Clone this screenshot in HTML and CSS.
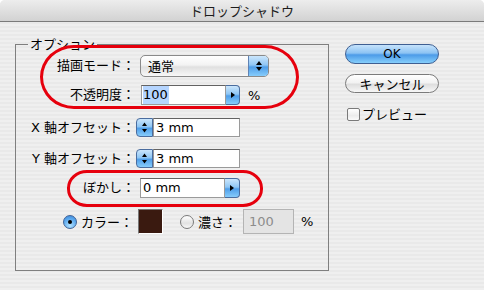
FILE: index.html
```html
<!DOCTYPE html>
<html lang="ja">
<head>
<meta charset="utf-8">
<title>ドロップシャドウ</title>
<link rel="stylesheet" href="styles.css">
</head>
<body>
<div class="window">
  <div class="titlebar">ドロップシャドウ</div>
  <div class="content">
    <fieldset class="group">
      <legend>オプション</legend>
      <div class="rows">
        <div class="row r1">
          <span class="lbl">描画モード：</span>
          <div class="popup">
            <span class="popval">通常</span>
            <span class="popcap"><svg width="8" height="14" viewBox="0 0 8 14"><path d="M4 2 L7 6 H1 Z M4 12 L1 8 H7 Z" fill="#000"/></svg></span>
          </div>
        </div>
        <div class="row r2">
          <span class="lbl">不透明度：</span>
          <div class="field f-op"><span class="sel">100</span></div>
          <span class="arrowbtn"><svg width="6" height="8" viewBox="0 0 6 8"><path d="M1 1 L5 4 L1 7 Z" fill="#000"/></svg></span>
          <span class="unit">%</span>
        </div>
        <div class="row r3">
          <span class="lbl">X 軸オフセット：</span>
          <span class="stepper"><svg width="7" height="13" viewBox="0 0 7 13"><path d="M3.5 1.5 L6 5 H1 Z M3.5 11.5 L1 8 H6 Z" fill="#000"/></svg></span>
          <div class="field f-off">3 mm</div>
        </div>
        <div class="row r4">
          <span class="lbl">Y 軸オフセット：</span>
          <span class="stepper"><svg width="7" height="13" viewBox="0 0 7 13"><path d="M3.5 1.5 L6 5 H1 Z M3.5 11.5 L1 8 H6 Z" fill="#000"/></svg></span>
          <div class="field f-off">3 mm</div>
        </div>
        <div class="row r5">
          <span class="lbl">ぼかし：</span>
          <div class="field f-blur">0 mm</div>
          <span class="arrowbtn"><svg width="6" height="8" viewBox="0 0 6 8"><path d="M1 1 L5 4 L1 7 Z" fill="#000"/></svg></span>
        </div>
        <div class="row r6">
          <span class="radio on"></span>
          <span class="rlbl">カラー：</span>
          <span class="swatch"></span>
          <span class="radio off"></span>
          <span class="rlbl">濃さ：</span>
          <div class="field dis">100</div>
          <span class="unit">%</span>
        </div>
      </div>
    </fieldset>
    <div class="side">
      <button class="btn ok">OK</button>
      <button class="btn cancel">キャンセル</button>
      <label class="check"><span class="box"></span>プレビュー</label>
    </div>
  </div>
  <div class="mark m1"></div>
  <div class="mark m2"></div>
</div>
</body>
</html>
```
FILE: styles.css
```css
* { box-sizing: border-box; }
html, body { margin: 0; padding: 0; }
body {
  width: 484px;
  height: 290px;
  overflow: hidden;
  background: #ffffff;
  font-family: "DejaVu Sans", "Noto Sans CJK JP", sans-serif;
  font-size: 13px;
  color: #000;
}
.window {
  position: relative;
  width: 484px;
  height: 290px;
  border-radius: 5px 5px 0 0;
  overflow: hidden;
  background: repeating-linear-gradient(to bottom, #efefef 0 2px, #e9e9e9 2px 4px);
}
.titlebar {
  height: 22px;
  border-bottom: 1px solid #7b7b7b;
  background: linear-gradient(#ededed, #d2d2d2);
  text-align: center;
  line-height: 21px;
  font-family: "Noto Sans CJK JP", sans-serif;
  color: #1c1c1c;
}
.content {
  display: flex;
  align-items: flex-start;
  padding-left: 15px;
}
.group {
  margin: 14px 0 0;
  padding: 0;
  border: 1px solid #7f7f7f;
  width: 314px;
  height: 235px;
  min-width: 0;
}
.group legend {
  margin-left: 12px;
  padding: 0 2px;
  line-height: 16px;
  font-family: "Noto Sans CJK JP", sans-serif;
}
.rows {
  display: flex;
  flex-direction: column;
  padding-top: 3px;
}
.row {
  display: flex;
  align-items: center;
}
.r1 { height: 22px; }
.r2 { height: 20px; margin-top: 8px; }
.r3 { height: 19px; margin-top: 13px; }
.r4 { height: 19px; margin-top: 12px; }
.r5 { height: 20px; margin-top: 10px; }
.r6 { height: 25px; margin-top: 11px; padding-left: 47px; }
.lbl {
  width: 119px;
  text-align: right;
  white-space: nowrap;
  line-height: 16px;
}
.popup {
  margin-left: 5px;
  width: 129px;
  height: 22px;
  display: flex;
  border: 1px solid #8a8a8a;
  border-radius: 5px;
  overflow: hidden;
  background: linear-gradient(#ffffff 0%, #f3f3f3 45%, #e0e0e0 55%, #f7f7f7 100%);
}
.popval {
  flex: 1;
  padding-left: 7px;
  line-height: 20px;
  font-family: "Noto Sans CJK JP", sans-serif;
}
.popcap, .arrowbtn, .stepper {
  display: flex;
  align-items: center;
  justify-content: center;
  background: linear-gradient(#cbe6fc 0%, #8fc6f4 45%, #4f9ee9 55%, #86ccfb 100%);
}
.popcap {
  width: 20px;
  border-left: 1px solid #5f82b4;
}
.field {
  height: 100%;
  display: flex;
  align-items: center;
  background: #fff;
  border: 1px solid #9a9a9a;
  border-top-color: #636363;
  padding-left: 2px;
  line-height: 16px;
  white-space: nowrap;
}
.f-op { margin-left: 6px; width: 85px; padding-left: 1px; }
.sel {
  background: #b5d5ff;
  height: 100%;
  display: flex;
  align-items: center;
  padding-right: 1px;
}
.arrowbtn {
  width: 14px;
  height: 100%;
  border: 1px solid #4a6c9e;
  border-left: none;
  border-radius: 0 4px 4px 0;
}
.r5 .arrowbtn { width: 15px; }
.unit { margin-left: 8px; }
.stepper {
  margin-left: 1px;
  width: 17px;
  height: 100%;
  border: 1px solid #4a6c9e;
  border-radius: 4px 0 0 4px;
}
.f-off { width: 87px; }
.f-blur { margin-left: 5px; width: 85px; }
.radio {
  width: 14px;
  height: 14px;
  border-radius: 50%;
  position: relative;
  flex: none;
}
.radio.on {
  border: 1px solid #3f6296;
  background: radial-gradient(circle at 50% 80%, #b2e2ff 0%, #5aa8ee 60%, #3d86d6 100%);
}
.radio.on::after {
  content: "";
  position: absolute;
  left: 4px;
  top: 4px;
  width: 4px;
  height: 4px;
  border-radius: 50%;
  background: #000;
}
.radio.off {
  margin-left: 17px;
  border: 1px solid #7a7a7a;
  background: linear-gradient(#ffffff, #e2e2e2 60%, #f8f8f8);
}
.rlbl {
  margin-left: 4px;
  font-family: "Noto Sans CJK JP", sans-serif;
  white-space: nowrap;
}
.swatch {
  margin-left: 5px;
  width: 25px;
  height: 25px;
  background: #3a1a10;
  border: 1px solid #fff;
  border-top-color: #777;
  border-left-color: #777;
}
.field.dis {
  margin-left: 6px;
  width: 51px;
  background: #e4e4e4;
  border: 1px solid #b4b4b4;
  color: #8c8c8c;
  padding-left: 5px;
}
.r6 .unit { margin-left: 7px; }
.side {
  margin-left: 16px;
  margin-top: 22px;
  display: flex;
  flex-direction: column;
  align-items: flex-start;
}
.btn {
  width: 94px;
  border-radius: 10px;
  font-size: 13px;
  padding: 0;
  color: #000;
  line-height: 16px;
}
.ok {
  height: 20px;
  border: 1px solid #3f5f92;
  background: linear-gradient(#c6e3fc 0%, #8cc3f3 45%, #4c9be8 55%, #86cffc 100%);
  font-family: "DejaVu Sans", sans-serif;
  font-size: 12px;
}
.cancel {
  margin-top: 10px;
  height: 19px;
  border: 1px solid #7b7b7b;
  background: linear-gradient(#ffffff 0%, #f2f2f2 45%, #dedede 55%, #f7f7f7 100%);
  font-family: "Noto Sans CJK JP", sans-serif;
}
.check {
  margin-top: 13px;
  margin-left: 2px;
  display: flex;
  align-items: center;
  line-height: 16px;
  font-family: "Noto Sans CJK JP", sans-serif;
}
.box {
  width: 13px;
  height: 13px;
  margin-right: 2px;
  border: 1px solid #7a7a7a;
  border-radius: 2px;
  background: linear-gradient(#ffffff, #ececec 60%, #fafafa);
}
.mark {
  position: absolute;
  border: 3px solid #e6000d;
}
.m1 {
  left: 40px;
  top: 45px;
  width: 259px;
  height: 64px;
  border-radius: 34px / 32px;
}
.m2 {
  left: 67px;
  top: 170px;
  width: 196px;
  height: 37px;
  border-radius: 20px / 18px;
}
```
